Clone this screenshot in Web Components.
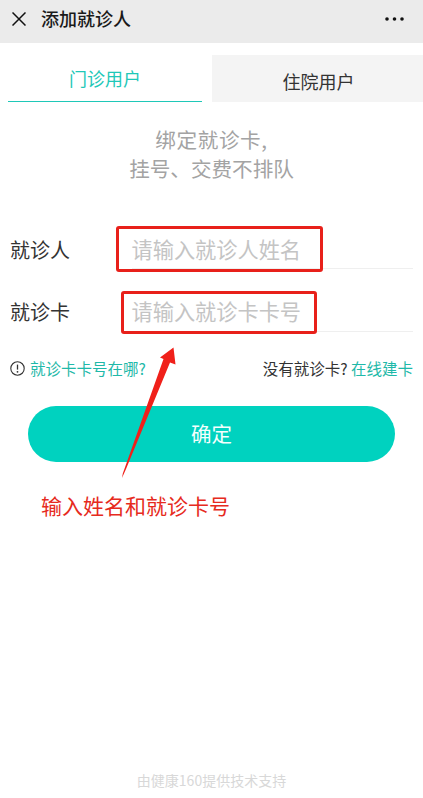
<!DOCTYPE html>
<html lang="zh-CN">
<head>
<meta charset="utf-8">
<title>添加就诊人</title>
<style>
html,body{margin:0;padding:0;background:#fff}
body{font-family:"Noto Sans CJK SC","Noto Sans",sans-serif;width:423px;height:798px;overflow:hidden}
</style>
</head>
<body>
<app-page></app-page>
<script>
function def(name, html){
  customElements.define(name, class extends HTMLElement{
    constructor(){super();this.attachShadow({mode:'open'}).innerHTML=html;}
  });
}
def('top-bar',`<style>
:host{display:flex;align-items:center;height:43px;background:#ebebeb;color:#1a1a1a;box-sizing:border-box;padding:0 19px 7px 12px}
svg{display:block;flex:none}
.t{margin-left:15px;flex:1;font-size:18px;line-height:26px;font-weight:500;margin-top:-1px}
</style>
<svg style="margin-top:1px" width="14" height="14" viewBox="0 0 14 14"><path d="M.5.5l13 13M13.5.5l-13 13" stroke="#111" stroke-width="1.5" fill="none"/></svg>
<div class="t"><slot></slot></div>
<svg style="margin-top:1px" width="19" height="4" viewBox="0 0 19 4"><circle cx="2" cy="2" r="1.8" fill="#111"/><circle cx="9.5" cy="2" r="1.8" fill="#111"/><circle cx="17" cy="2" r="1.8" fill="#111"/></svg>`);

def('tab-bar',`<style>
:host{display:flex;height:47px;margin-top:12px;padding-left:8px;gap:10px}
</style><slot></slot>`);

def('tab-item',`<style>
:host{display:flex;justify-content:center;box-sizing:border-box;font-size:18px;line-height:26px;color:#333;background:#f4f4f4;padding:13px 0 0 2px;flex:0 0 211px}
:host([active]){flex:0 0 194px;background:#fff;color:#1fc8b8;border-bottom:1px solid #1fc8b8;padding:10px 0 0}
</style><slot></slot>`);

def('intro-text',`<style>
:host{display:block;text-align:center;font-size:20.6px;line-height:29px;color:#a3a3a3;margin-top:23px}
</style><slot></slot>`);

def('form-row',`<style>
:host{display:flex;align-items:stretch;height:63px;box-sizing:border-box;margin:0 10px}
.l{flex:0 0 121.5px;font-size:20px;color:#333;line-height:30px;align-self:flex-end;padding-bottom:var(--lb,4px)}
.v{flex:1;font-size:21.2px;color:#c4c4c4;line-height:30px;display:flex;align-items:flex-end;box-sizing:border-box;padding-bottom:var(--vb,4px);border-bottom:1px solid #efefef}
</style>
<div class="l"><slot name="label"></slot></div>
<div class="v"><slot></slot></div>`);

def('form-list',`<style>
:host{display:block;margin-top:23px}
</style><slot></slot>`);

def('help-row',`<style>
:host{display:flex;justify-content:space-between;align-items:center;height:24px;margin:24px 10px 0;font-size:15.5px;color:#333}
.a{display:flex;align-items:center;gap:5px}
svg{display:block}
</style>
<div class="a"><svg width="15" height="15" viewBox="0 0 15 15"><circle cx="7.5" cy="7.5" r="6.7" fill="none" stroke="#333" stroke-width="1.1"/><path d="M7.5 3.6v5" stroke="#333" stroke-width="1.3" fill="none"/><circle cx="7.5" cy="10.8" r=".9" fill="#333"/></svg><slot name="left"></slot></div>
<div><slot name="right"></slot></div>`);

def('primary-button',`<style>
:host{display:flex;align-items:center;justify-content:center;height:56px;margin:26px 28px 0;padding-bottom:2px;box-sizing:border-box;border-radius:28px;background:#00d2bf;color:#f4fffd;font-size:20.5px}
</style><slot></slot>`);

def('note-text',`<style>
:host{display:block;margin:28px 0 0 41px;font-size:21px;line-height:30px;color:#e62a20}
</style><slot></slot>`);

def('foot-note',`<style>
:host{position:absolute;left:0;right:0;bottom:8px;text-align:center;font-size:14px;line-height:20px;color:#d8d8d8}
</style><slot></slot>`);

def('mark-box',`<style>
:host{position:absolute;box-sizing:border-box;border:3px solid #e8201a;border-radius:3px;pointer-events:none}
</style>`);

def('mark-arrow',`<style>
:host{position:absolute;left:0;top:0;pointer-events:none}
svg{display:block}
</style>
<svg width="423" height="798" viewBox="0 0 423 798"><path d="M122 478L122.8 473.5L163.5 359L160 357.5L173.5 347.5L175.5 364.5L170 362.5L126 469Z" fill="#f0201a"/></svg>`);

def('app-page',`<style>
:host{display:block;position:relative;width:423px;height:798px;background:#fff;overflow:hidden}
</style>
<top-bar>添加就诊人</top-bar>
<tab-bar><tab-item active>门诊用户</tab-item><tab-item>住院用户</tab-item></tab-bar>
<intro-text><span style="letter-spacing:.6px">绑定就诊卡,</span><br>挂号、交费不排队</intro-text>
<form-list>
<form-row><span slot="label">就诊人</span>请输入就诊人姓名</form-row>
<form-row style="--lb:5px;--vb:5px"><span slot="label">就诊卡</span>请输入就诊卡卡号</form-row>
</form-list>
<help-row><span slot="left" style="color:#1fb9a9">就诊卡卡号在哪?</span><span slot="right">没有就诊卡? <span style="color:#1fb9a9">在线建卡</span></span></help-row>
<primary-button>确定</primary-button>
<note-text>输入姓名和就诊卡号</note-text>
<foot-note>由健康160提供技术支持</foot-note>
<mark-box style="left:116px;top:226px;width:207px;height:46px"></mark-box>
<mark-box style="left:121px;top:291px;width:196px;height:43px"></mark-box>
<mark-arrow></mark-arrow>`);
</script>
</body>
</html>
